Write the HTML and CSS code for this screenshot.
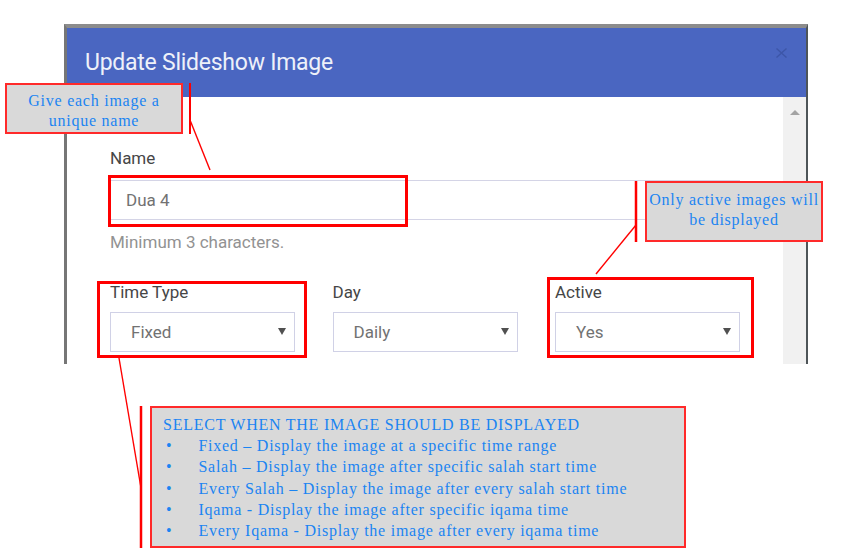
FILE: index.html
```html
<!DOCTYPE html>
<html lang="en">
<head>
<meta charset="utf-8">
<title>Update Slideshow Image</title>
<link rel="stylesheet" href="styles.css">
</head>
<body>
<div class="page">
  <div class="shot">
    <div class="modal-header">
      <h1 class="modal-title">Update Slideshow Image</h1>
      <span class="close" aria-label="Close">
        <svg width="11" height="10" viewBox="0 0 11 10"><path d="M0.5 0.5 L10.5 9.5 M10.5 0.5 L0.5 9.5" stroke="#3d56a8" stroke-width="1.4" fill="none"/></svg>
      </span>
    </div>
    <div class="modal-body">
      <div class="form">
        <div class="field">
          <label class="label">Name</label>
          <input class="input" type="text" value="Dua 4" readonly>
          <div class="help">Minimum 3 characters.</div>
        </div>
        <div class="row">
          <div class="field">
            <label class="label">Time Type</label>
            <div class="select"><span>Fixed</span><i class="caret"></i></div>
          </div>
          <div class="field">
            <label class="label">Day</label>
            <div class="select"><span>Daily</span><i class="caret"></i></div>
          </div>
          <div class="field">
            <label class="label">Active</label>
            <div class="select"><span>Yes</span><i class="caret"></i></div>
          </div>
        </div>
      </div>
      <div class="scrollbar"><i class="scroll-up"></i></div>
    </div>
  </div>

  <div class="hl hl-name"></div>
  <div class="hl hl-time"></div>
  <div class="hl hl-active"></div>

  <div class="note note-name">Give each image a<br>unique name</div>
  <div class="note note-active">Only active images will<br>be displayed</div>
  <div class="note note-time">
    <div class="note-title">SELECT WHEN THE IMAGE SHOULD BE DISPLAYED</div>
    <ul class="note-list">
      <li>Fixed – Display the image at a specific time range</li>
      <li>Salah – Display the image after specific salah start time</li>
      <li>Every Salah – Display the image after every salah start time</li>
      <li>Iqama - Display the image after specific iqama time</li>
      <li>Every Iqama - Display the image after every iqama time</li>
    </ul>
  </div>

  <svg class="connectors" width="856" height="555" viewBox="0 0 856 555">
    <g stroke="#ff0000" fill="none">
      <line x1="190" y1="83" x2="190" y2="134" stroke-width="2"/>
      <line x1="190" y1="120" x2="210" y2="170" stroke-width="1.4"/>
      <line x1="636" y1="181" x2="636" y2="242" stroke-width="2.5"/>
      <line x1="636" y1="225" x2="596" y2="274" stroke-width="1.4"/>
      <line x1="141" y1="406" x2="141" y2="548" stroke-width="2.5"/>
      <line x1="119" y1="358" x2="141" y2="488" stroke-width="1.4"/>
    </g>
  </svg>
</div>
</body>
</html>
```
FILE: styles.css
```css
* { box-sizing: border-box; }

html, body {
  margin: 0;
  padding: 0;
  background: #ffffff;
}

.page {
  position: relative;
  width: 856px;
  height: 555px;
  overflow: hidden;
  font-family: "Roboto", "Liberation Sans", sans-serif;
}

.shot {
  margin: 24px 0 0 64px;
  width: 744px;
  height: 340px;
  border-top: 4px solid #8c8c8c;
  border-left: 3px solid #767676;
  border-right: 2px solid #4e5558;
  background: #ffffff;
  display: flex;
  flex-direction: column;
}

.modal-header {
  height: 69px;
  background: #4a66c1;
  display: flex;
  align-items: center;
  justify-content: space-between;
  padding: 0 19px 0 18px;
}

.modal-title {
  margin: 0;
  font-weight: 400;
  font-size: 23px;
  color: #eef1f9;
  letter-spacing: -0.25px;
}

.close {
  align-self: flex-start;
  margin-top: 20px;
  width: 11px;
  height: 10px;
  display: block;
}
.close svg { display: block; }

.modal-body {
  flex: 1;
  display: flex;
}

.form {
  flex: 1;
  padding: 50.5px 43px 0 43px;
}

.field {
  display: flex;
  flex-direction: column;
}

.label {
  font-size: 17px;
  line-height: 20px;
  color: #464646;
}

.input {
  margin-top: 12px;
  height: 40px;
  width: 100%;
  border: 1px solid #d4d4e6;
  padding: 0 15px;
  font-family: inherit;
  font-size: 17px;
  color: #727272;
  background: #fff;
  outline: none;
}

.help {
  margin-top: 12px;
  font-size: 17px;
  line-height: 20px;
  color: #929292;
}

.row {
  margin-top: 30px;
  display: grid;
  grid-template-columns: repeat(3, 1fr);
  column-gap: 37.5px;
}

.select {
  margin-top: 10px;
  height: 40px;
  border: 1px solid #d0d1e6;
  padding: 0 8px 0 20px;
  display: flex;
  align-items: center;
  justify-content: space-between;
  font-size: 17px;
  color: #727272;
}

.caret {
  width: 0;
  height: 0;
  border-left: 4.5px solid transparent;
  border-right: 4.5px solid transparent;
  border-top: 7px solid #505050;
}

.scrollbar {
  width: 23px;
  background: #f1f1f1;
  display: flex;
  justify-content: center;
}

.scroll-up {
  margin-top: 13px;
  width: 0;
  height: 0;
  border-left: 5.5px solid transparent;
  border-right: 5.5px solid transparent;
  border-bottom: 5px solid #a3a3a3;
}

/* annotations */
.hl {
  position: absolute;
  border: 3px solid #ff0000;
}
.hl-name { left: 108px; top: 175px; width: 300px; height: 52px; }
.hl-time { left: 97px; top: 281px; width: 210px; height: 77px; }
.hl-active { left: 547px; top: 277px; width: 207px; height: 81px; }

.note {
  position: absolute;
  background: #d9d9d9;
  border: 2px solid #ff2a2a;
  color: #1b84f2;
  font-family: "Liberation Serif", "Times New Roman", serif;
  font-size: 16px;
  letter-spacing: 0.75px;
  line-height: 20px;
  text-align: center;
}
.note-name { left: 5px; top: 83px; width: 178px; height: 51px; padding-top: 6px; }
.note-active { left: 645px; top: 181px; width: 178px; height: 61px; padding-top: 7px; }
.note-time {
  left: 150px;
  top: 406px;
  width: 536px;
  height: 142px;
  padding: 6px 11px 0 11px;
  text-align: left;
  line-height: 21.2px;
}

.note-list {
  margin: 0;
  padding: 0;
  list-style: none;
}
.note-list li::before {
  content: "•";
  display: inline-block;
  width: 32.4px;
  padding-left: 3px;
}

.connectors {
  position: absolute;
  left: 0;
  top: 0;
  pointer-events: none;
}
```
